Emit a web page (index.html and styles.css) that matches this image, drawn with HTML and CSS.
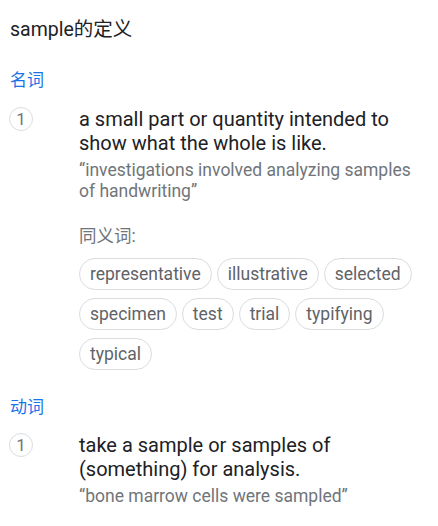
FILE: index.html
```html
<!DOCTYPE html>
<html lang="zh">
<head>
<meta charset="utf-8">
<link rel="stylesheet" href="styles.css">
</head>
<body>
<div class="page">
  <h1 class="title">sample的定义</h1>

  <div class="pos">名词</div>
  <div class="entry">
    <div class="num">1</div>
    <div class="body">
      <div class="def">a small part or quantity intended to show what the whole is like.</div>
      <div class="example">“investigations involved analyzing samples of handwriting”</div>
      <div class="syn-label">同义词:</div>
      <div class="chips">
        <span class="chip">representative</span>
        <span class="chip">illustrative</span>
        <span class="chip">selected</span>
        <span class="chip">specimen</span>
        <span class="chip">test</span>
        <span class="chip">trial</span>
        <span class="chip">typifying</span>
        <span class="chip">typical</span>
      </div>
    </div>
  </div>

  <div class="pos pos-verb">动词</div>
  <div class="entry entry-verb">
    <div class="num">1</div>
    <div class="body">
      <div class="def">take a sample or samples of (something) for analysis.</div>
      <div class="example">“bone marrow cells were sampled”</div>
    </div>
  </div>
</div>
</body>
</html>
```

FILE: styles.css
```css
html, body {
  margin: 0;
  padding: 0;
  background: #fff;
}
body {
  font-family: Roboto, "Noto Sans CJK SC", sans-serif;
  color: #202124;
}
.page {
  padding: 18px 10px 0 10px;
}
.title {
  margin: 0;
  font-size: 19.5px;
  font-weight: 400;
  line-height: 24px;
  color: #202124;
}
.pos {
  margin-top: 26px;
  font-size: 17px;
  line-height: 24px;
  color: #1a73e8;
}
.pos-verb {
  margin-top: 25px;
}
.entry {
  display: flex;
  margin-top: 15px;
}
.entry-verb {
  margin-top: 14px;
}
.num {
  flex: none;
  width: 22px;
  height: 22px;
  margin-left: -1px;
  margin-top: 0;
  border: 1px solid #dadce0;
  border-radius: 50%;
  font-size: 17px;
  line-height: 22px;
  text-align: center;
  color: #70757a;
}
.body {
  margin-left: 46px;
  flex: 1;
  min-width: 0;
}
.def {
  font-size: 20px;
  line-height: 24px;
  color: #202124;
}
.example {
  margin-top: 5px;
  font-size: 17.5px;
  line-height: 21px;
  color: #70757a;
}
.syn-label {
  margin-top: 22px;
  font-size: 17.5px;
  line-height: 24px;
  color: #70757a;
}
.chips {
  display: flex;
  flex-wrap: wrap;
  gap: 8px 5px;
  margin-top: 10px;
}
.chip {
  display: inline-block;
  height: 30px;
  padding: 0 10px;
  border: 1px solid #dadce0;
  border-radius: 16px;
  font-size: 17.5px;
  line-height: 30px;
  color: #5f6368;
}
```
